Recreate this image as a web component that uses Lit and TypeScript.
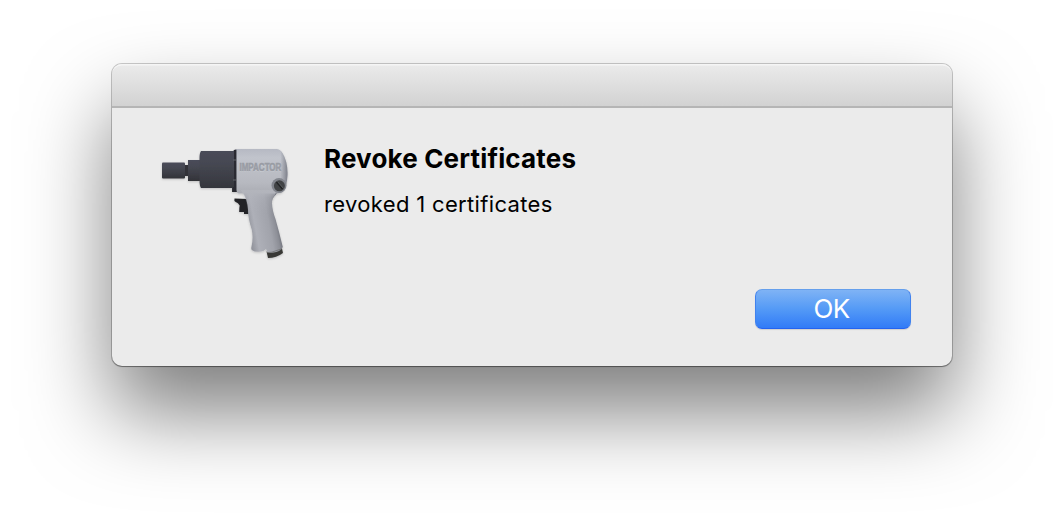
import { LitElement, html, css } from "lit";
import { customElement, property } from "lit/decorators.js";

@customElement("impact-icon")
class ImpactIcon extends LitElement {
  static styles = css`
    :host { display: block; width: 140px; height: 117px; }
    svg { display: block; overflow: visible; }
    .engraved { font: 700 8px "Liberation Sans", Arial, sans-serif; fill: #999ca4; stroke: #999ca4; stroke-width: 0.45px; }
    .lower { fill: #d0d2d9; stroke: none; }
  `;
  render() {
    return html`<svg width="140" height="125" viewBox="0 0 140 125">
      <defs>
        <linearGradient id="steel" x1="0" y1="0" x2="0" y2="1">
          <stop offset="0" stop-color="#4a4c5a"/><stop offset=".4" stop-color="#444650"/><stop offset="1" stop-color="#323338"/>
        </linearGradient>
        <linearGradient id="body" x1="0" y1="0" x2="0" y2="1">
          <stop offset="0" stop-color="#b6b9c3"/><stop offset=".2" stop-color="#c1c4cc"/><stop offset=".75" stop-color="#b7b9c0"/><stop offset="1" stop-color="#aaacb3"/>
        </linearGradient>
        <linearGradient id="edge" x1="0" y1="0" x2="1" y2="0">
          <stop offset="0" stop-color="#666974" stop-opacity="0"/><stop offset=".86" stop-color="#666974" stop-opacity="0"/><stop offset="1" stop-color="#5b5e69" stop-opacity=".65"/>
        </linearGradient>
        <linearGradient id="grip" gradientUnits="userSpaceOnUse" x1="93" y1="87" x2="125" y2="81">
          <stop offset="0" stop-color="#91939b"/><stop offset=".22" stop-color="#aeb0b8"/><stop offset=".65" stop-color="#a1a3ab"/><stop offset=".84" stop-color="#8d8f97"/><stop offset="1" stop-color="#666972"/>
        </linearGradient>
        <linearGradient id="neck" x1="0" y1="0" x2="0" y2="1">
          <stop offset="0" stop-color="#b3b5bc" stop-opacity="1"/><stop offset=".3" stop-color="#b5b7bf" stop-opacity=".4"/><stop offset="1" stop-color="#a9abb3" stop-opacity="0"/>
        </linearGradient>
        <filter id="soft" x="-10%" y="-10%" width="120%" height="130%"><feDropShadow dx="0" dy="1" stdDeviation=".8" flood-color="#000" flood-opacity=".18"/></filter>
      </defs>
      <g filter="url(#soft)">
        <rect x="29" y="25" width="6" height="11" fill="#303138"/>
        <rect x="7" y="22.500" width="23" height="16" rx="1" fill="url(#steel)"/>
        <path d="M33 20h12v21H33z" fill="url(#steel)"/>
        <path d="M46 11h32l2-1.500h2.500V52H77v-4H46q-1.500-2-1.500-8V18q0-5 1.500-7z" fill="url(#steel)"/>
        <path d="M79 10h2.500v42H78v-5h1z" fill="#292a30"/>
        <path d="M78 20h3M78 40h3" stroke="#60626b"/>
        <path d="M79.500 58.500 92 59q1.800 7 1.800 15H89v-2h-4.800q0-4.500.5-6.500-1.500-3-4-3.500-2-1-1.200-3.500z" fill="#222327"/>
        <path d="M111.500 111.500 127 108.500l1 4.500q-6.500 5-15 5z" fill="#383936"/>
        <path d="M88 51h36l-3.500 4q-3.500 3-3.500 8 .2 7 3.500 16 4 14 7.300 28-2 4-6.500 5-5 1.300-9 .2L111 109q-2 2.500-7 2.700-4.500.3-6.800-1.500-1.500-.8-.7-3.700 2-9 .2-17-3.700-11-3.700-20-.4-9.500-5-17.500z" fill="url(#grip)"/>
        <path d="M81.500 9h40q3.500 0 6 4 5.500 9 5 22-.4 11-4.500 16-2 2.500-5.500 2.500H84q-2.500 0-2.500-4z" fill="url(#body)"/>
        <path d="M81.500 9h40q3.500 0 6 4 5.500 9 5 22-.4 11-4.500 16-2 2.500-5.500 2.500H84q-2.500 0-2.500-4z" fill="url(#edge)"/>
        <path d="M86 50h35l-1 5q-3 3-3 8l1 12H93q-.5-15-5-21z" fill="url(#neck)"/>
      </g>
      <g transform="translate(84.5 31.2) scale(.93 1.36)">
        <text class="engraved lower" x="0" y=".6" textLength="45" lengthAdjust="spacingAndGlyphs">IMPACTOR</text>
        <text class="engraved" aria-hidden="true" x="0" y="0" textLength="45" lengthAdjust="spacingAndGlyphs">IMPACTOR</text>
      </g>
      <circle cx="124" cy="45.500" r="7.500" fill="#82858d"/>
      <circle cx="124.400" cy="45.800" r="5.500" fill="#414345"/>
      <path d="m121.500 42 6 7" stroke="#202123" stroke-width="1.500"/>
      <path d="m122.500 41.500 6 7" stroke="#626568" stroke-width=".7"/>
      <path d="m112 112.700 5-.6 10-3.400" fill="none" stroke="#6d6f70" stroke-width=".8"/>
    </svg>`;
  }
}

@customElement("app-root")
class AppRoot extends LitElement {
  @property() heading = "Revoke Certificates";
  @property() message = "revoked 1 certificates";
  static styles = css`
    :host { display: flex; box-sizing: border-box; height: 526px; padding: 64px 112px 160px; overflow: hidden; background: #fff; font-family: Inter, sans-serif; color: #000; }
    .window { flex: 1; display: flex; flex-direction: column; border-radius: 10px; background: #ebebeb; box-shadow: 0 0 0 1px rgba(0,0,0,.2), 0 1px 1px rgba(0,0,0,.3), 0 46px 84px rgba(0,0,0,.51); }
    .titlebar { box-sizing: border-box; height: 44px; border-radius: 10px 10px 0 0; border-bottom: 2px solid #b5b5b5; background: linear-gradient(#ebebeb, #d2d2d2); box-shadow: inset 0 2px 0 -0.5px #f5f5f5; }
    .content { display: grid; flex: 1; grid-template-columns: 140px 1fr; column-gap: 29px; grid-template-rows: 1fr auto; padding: 32px 41px 37px 43px; }
    .copy { display: flex; flex-direction: column; align-items: flex-start; gap: 15px; padding-top: 3px; }
    h1, p { margin: 0; white-space: nowrap; }
    h1 { font-size: 26px; line-height: 32px; font-weight: 700; letter-spacing: 0.17px; }
    p { font-size: 22px; line-height: 28px; letter-spacing: 0.34px; }
    .actions { grid-column: 1 / -1; display: flex; justify-content: flex-end; }
    button { box-sizing: border-box; width: 156px; height: 40px; padding: 0 3px 0 0; border: 1px solid; border-color: #659fec #4182ee #2463f0; border-radius: 7px; background: linear-gradient(#7fb3f5, #549af6 50%, #317bf7); box-shadow: 0 1px 1px rgba(0,0,0,.12); color: #fff; font: 400 26px/38px Inter, sans-serif; letter-spacing: -0.6px; }
  `;
  render() {
    return html`<main class="window">
      <header class="titlebar"></header>
      <section class="content">
        <impact-icon></impact-icon>
        <div class="copy"><h1>${this.heading}</h1><p>${this.message}</p></div>
        <div class="actions"><button>OK</button></div>
      </section>
    </main>`;
  }
}
